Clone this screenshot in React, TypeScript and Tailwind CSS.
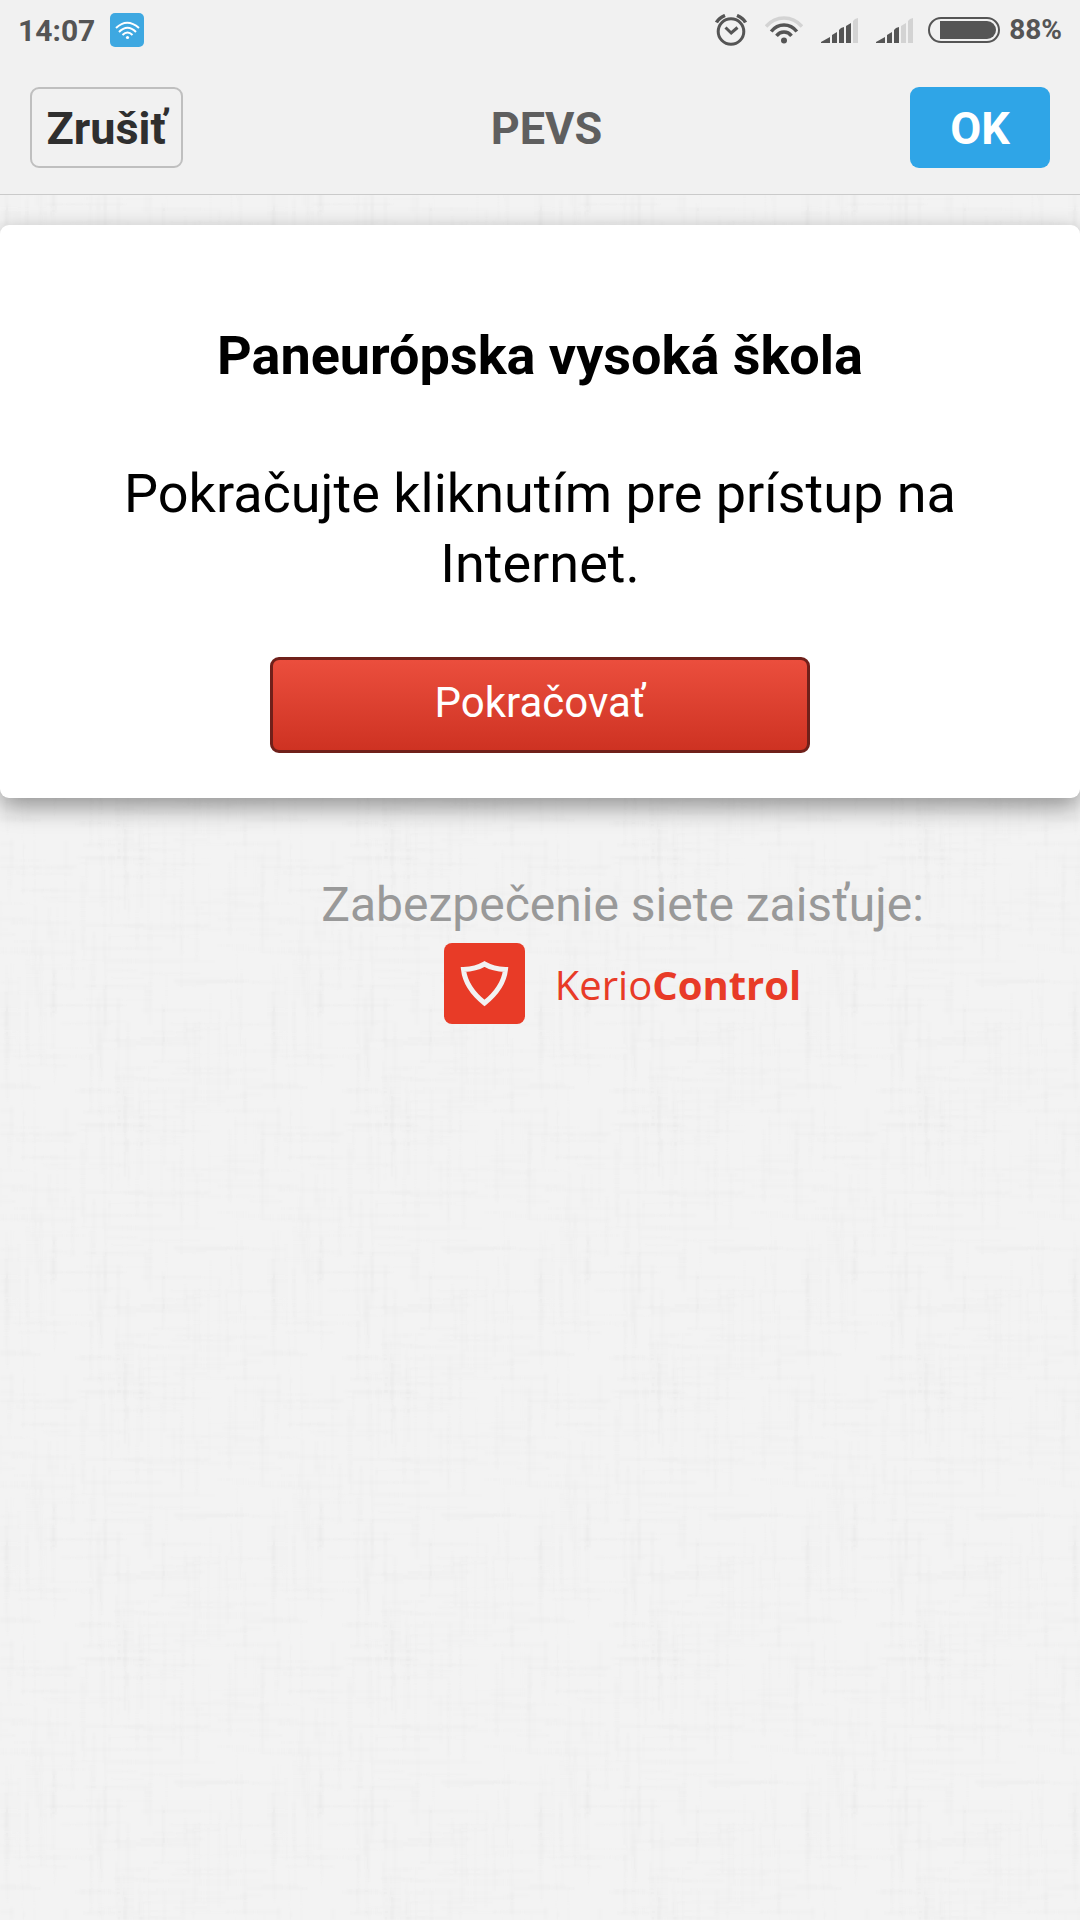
import { clsx } from 'clsx'

const TILE = 267

// Small deterministic generator so the linen weave is the same on every render
function createRandom(seed: number) {
  let state = seed
  return () => {
    state = (state * 1664525 + 1013904223) % 4294967296
    return state / 4294967296
  }
}

const random = createRandom(7)
const threads = Array.from({ length: 420 }, (_, index) => {
  const length = Math.round(25 + random() * 65)
  const thickness = random() > 0.65 ? 4 : 3
  const x = Math.round(random() * TILE)
  const y = Math.round(random() * TILE)
  const vertical = index % 2 === 0
  return {
    x,
    y,
    width: vertical ? thickness : length,
    height: vertical ? length : thickness,
    fill: random() > 0.5 ? '#000000' : '#ffffff',
    opacity: 0.003 + random() * 0.007
  }
})

function LinenBackground() {
  return (
    <svg className="absolute inset-0 -z-10 h-full w-full" aria-hidden="true">
      <defs>
        <filter id="soften" x="0" y="0" width="1" height="1">
          <feGaussianBlur stdDeviation="1" />
        </filter>
        <pattern id="linen" width={TILE} height={TILE} patternUnits="userSpaceOnUse">
          {threads.map((thread, index) => (
            <g key={index}>
              <rect {...thread} />
              <rect {...thread} x={thread.x - TILE} />
              <rect {...thread} y={thread.y - TILE} />
            </g>
          ))}
        </pattern>
      </defs>
      <rect width="100%" height="100%" fill="#f3f3f3" />
      <rect width="100%" height="100%" fill="url(#linen)" filter="url(#soften)" />
    </svg>
  )
}

function WifiBadge() {
  return (
    <svg width="34" height="34" viewBox="0 0 34 34" fill="none" stroke="#fff" strokeWidth="2" aria-hidden="true">
      <rect width="34" height="34" rx="5" fill="#3ea8e1" stroke="none" />
      <path d="M6 15Q17 4.500 29 15" />
      <path d="M9 19Q17.500 10.500 26 19" />
      <path d="M12.500 22Q17.500 17 22.500 22" />
      <circle cx="17.500" cy="24.500" r="1.600" fill="#fff" stroke="none" />
    </svg>
  )
}

function AlarmIcon() {
  return (
    <svg width="32" height="32" viewBox="0 0 32 32" fill="none" stroke="#555" strokeWidth="3" aria-hidden="true">
      <circle cx="16" cy="17.500" r="12.800" />
      <path d="M10.500 13.500L16.200 19L22.500 13.500" />
      <path d="M1.500 8.500Q4 4 10 1.500M22 1.500Q28 4 30.500 8.500" strokeWidth="3.500" />
    </svg>
  )
}

function WifiIcon() {
  return (
    <svg width="38" height="28" viewBox="0 0 38 28" fill="none" strokeWidth="3.500" aria-hidden="true">
      <path d="M1 10.500C11 -0.800 27 -0.800 37 10.500" stroke="#d3d3d3" />
      <path d="M6.200 15.500C13 6.800 25 6.800 31.800 15.500" stroke="#555" />
      <path d="M11.500 19.800C15.500 14.800 22.500 14.800 26.500 19.800" stroke="#555" />
      <circle cx="19" cy="24.500" r="3" fill="#555" />
    </svg>
  )
}

const bars = [
  'M0 25V24L9 19V25Z',
  'M11 25V17L16 14V25Z',
  'M18 25V12L20 10L23 9V25Z',
  'M25 25V8L30 5V25Z',
  'M32 25V3L34 1L37 0V25Z'
]

function SignalIcon({ level }: { level: number }) {
  return (
    <svg width="37" height="25" viewBox="0 0 37 25" aria-hidden="true">
      {bars.map((bar, index) => (
        <path key={bar} d={bar} fill={index < level ? '#555' : '#d3d3d3'} />
      ))}
    </svg>
  )
}

function BatteryIcon() {
  return (
    <svg width="72" height="26" viewBox="0 0 72 26" aria-hidden="true">
      <rect x="1" y="1" width="70" height="24" rx="12" fill="none" stroke="#555" strokeWidth="2" />
      <path d="M12 4H59A9 9 0 0 1 59 22H12Z" fill="#555" />
    </svg>
  )
}

function StatusBar() {
  return (
    <div className="flex h-[60px] items-center justify-between px-[18px] font-bold text-[#555]">
      <div className="flex items-center gap-[15px]">
        <span className="text-[30px]">14:07</span>
        <WifiBadge />
      </div>
      <div className="flex items-center">
        <AlarmIcon />
        <div className="ml-[18px]">
          <WifiIcon />
        </div>
        <div className="ml-[18px] flex gap-[18px]">
          <SignalIcon level={4} />
          <SignalIcon level={3} />
        </div>
        <div className="mr-[9px] ml-[15px]">
          <BatteryIcon />
        </div>
        <span className="text-[28px]">88%</span>
      </div>
    </div>
  )
}

const headerButton = 'h-[81px] rounded-[9px] pt-[2px] text-[45px] leading-none font-bold'

function Header() {
  return (
    <header className="border-b border-[#cacaca] bg-[#f1f1f1]">
      <StatusBar />
      <div className="flex items-center justify-between px-[30px] pt-[27px] pb-[26px]">
        <button type="button" className={clsx(headerButton, 'w-[153px] border-2 border-[#bfbfbf] text-[#2f2f2f]')}>
          Zrušiť
        </button>
        <h1 className="pt-[2px] text-[45px] leading-none font-bold text-[#5f5f5f]">PEVS</h1>
        <button type="button" className={clsx(headerButton, 'w-[140px] bg-[#2fa5e7] text-white')}>
          OK
        </button>
      </div>
    </header>
  )
}

function KerioLogo() {
  return (
    <div className="mt-[3px] flex items-center gap-[30px]">
      <svg width="81" height="81" viewBox="0 0 81 81" aria-hidden="true">
        <rect width="81" height="81" rx="8" fill="#e83b27" />
        <path
          d="M40.500 21Q49 26 61.500 26.500C60 40 53 50 40.500 60C28 50 21 40 19.500 26.500Q32 26 40.500 21Z"
          fill="none"
          stroke="#f2f2f2"
          strokeWidth="5"
        />
      </svg>
      <span className="pt-[2px] font-['Open_Sans',sans-serif] text-[40px] leading-none text-[#e83b27]">
        Kerio<span className="font-bold">Control</span>
      </span>
    </div>
  )
}

export default function App() {
  return (
    <div className="relative isolate min-h-screen font-[Roboto,sans-serif]">
      <LinenBackground />
      <Header />
      <main>
        <section className="mt-[30px] rounded-[9px] bg-white px-[90px] pt-[96px] pb-[45px] text-center shadow-[0_9px_24px_rgba(0,0,0,0.4)]">
          <h2 className="text-[54px] leading-[70px] font-bold">Paneurópska vysoká škola</h2>
          <p className="mt-[68px] text-[54px] leading-[70px]">Pokračujte kliknutím pre prístup na Internet.</p>
          <button
            type="button"
            className="mt-[58px] h-24 w-3/5 rounded-[9px] border-3 border-[#70201a] bg-linear-to-b from-[#eb4e3d] to-[#ce3222] pb-1 text-[42px] leading-none text-white"
          >
            Pokračovať
          </button>
        </section>
        <footer className="mt-[72px] flex flex-col items-center pl-[165px]">
          <p className="text-[48px] leading-[70px] text-[#999]">Zabezpečenie siete zaisťuje:</p>
          <KerioLogo />
        </footer>
      </main>
    </div>
  )
}
